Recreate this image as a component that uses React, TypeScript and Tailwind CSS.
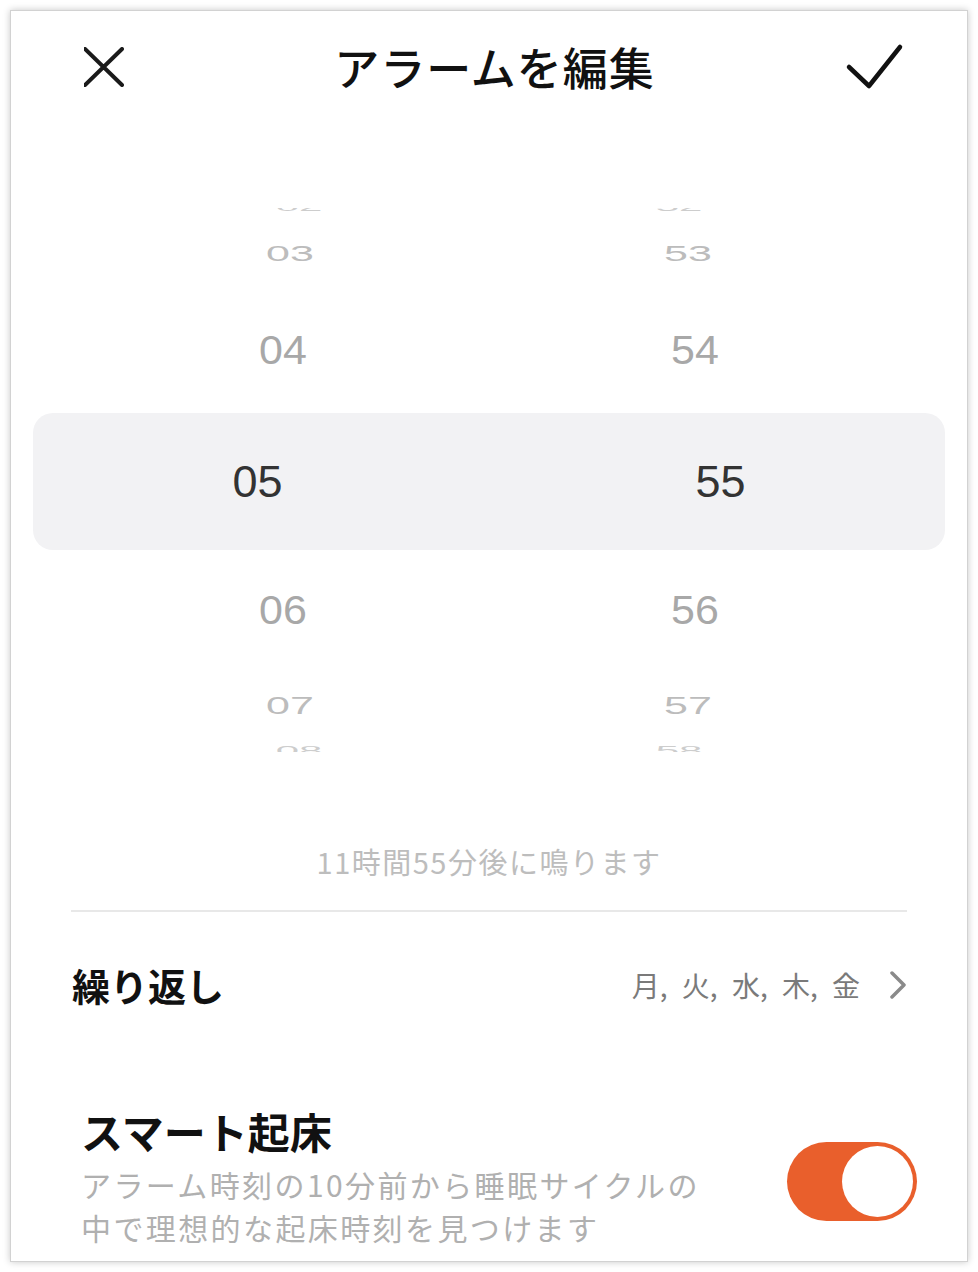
import React from "react";

type WheelRow = {
  hour: string;
  minute: string;
  rowClass: string;
  gapClass: string;
  textClass: string;
};

// rows of the time wheel, top to bottom (05 / 55 is the selected one)
const rows: WheelRow[] = [
  {
    hour: "02",
    minute: "52",
    rowClass: "h-[25px] -mt-[14px]",
    gapClass: "gap-[320px]",
    textClass: "text-[42px] text-[#cdcdcd] scale-y-[0.3]",
  },
  {
    hour: "03",
    minute: "53",
    rowClass: "h-[69px]",
    gapClass: "gap-[338px]",
    textClass: "text-[43px] text-[#bcbcbc] scale-y-[0.52]",
  },
  {
    hour: "04",
    minute: "54",
    rowClass: "h-[125px]",
    gapClass: "gap-[352px]",
    textClass: "text-[43px] text-[#a8a8a8] scale-y-[0.95]",
  },
  {
    hour: "05",
    minute: "55",
    rowClass: "h-[137px] mx-[22px] rounded-[20px] bg-[#f2f2f4]",
    gapClass: "gap-[403px]",
    textClass: "text-[45px] text-[#333333]",
  },
  {
    hour: "06",
    minute: "56",
    rowClass: "h-[121px]",
    gapClass: "gap-[352px]",
    textClass: "text-[43px] text-[#a8a8a8] scale-y-[0.95]",
  },
  {
    hour: "07",
    minute: "57",
    rowClass: "h-[71px]",
    gapClass: "gap-[338px]",
    textClass: "text-[43px] text-[#bcbcbc] scale-y-[0.55]",
  },
  {
    hour: "08",
    minute: "58",
    rowClass: "h-[18px]",
    gapClass: "gap-[320px]",
    textClass: "text-[42px] text-[#cdcdcd] scale-y-[0.3]",
  },
];

const jp = "font-['Noto_Sans_CJK_JP','Noto_Sans',sans-serif]";

const App = () => {
  return (
    <div className="w-[978px] h-[1272px] bg-white p-[10px]">
      <div
        className={`w-[958px] h-[1252px] overflow-hidden bg-white border border-[#d2d2d2] shadow-[0_0_7px_rgba(0,0,0,0.22)] ${jp}`}
      >
        {/* header */}
        <div className="grid grid-cols-[1fr_auto_1fr] items-center h-[111px] pl-[73px] pr-[62px]">
          <div>
            <svg width="40" height="40" viewBox="0 0 40 40" fill="none">
              <path
                d="M1 2 L38 38 M38 2 L1 38"
                stroke="#1a1a1a"
                strokeWidth="4"
                strokeLinecap="round"
              />
            </svg>
          </div>
          <div className="text-[45px] font-medium text-[#111] leading-none tracking-[1px]">
            アラームを編集
          </div>
          <div className="flex justify-end">
            <svg width="60" height="50" viewBox="0 0 60 50" fill="none">
              <path
                d="M4 25 L24 44 L55 5"
                stroke="#111"
                strokeWidth="4.5"
                strokeLinecap="round"
                strokeLinejoin="round"
              />
            </svg>
          </div>
        </div>

        {/* time wheel */}
        <div className="mt-[86px] h-[544px] overflow-hidden flex flex-col font-['Liberation_Sans',Arial,sans-serif]">
          {rows.map((row) => (
            <div
              key={row.hour}
              className={`shrink-0 flex items-center justify-center ${row.rowClass} ${row.gapClass}`}
            >
              <span className={`inline-block w-[60px] text-center leading-none ${row.textClass}`}>
                {row.hour}
              </span>
              <span className={`inline-block w-[60px] text-center leading-none ${row.textClass}`}>
                {row.minute}
              </span>
            </div>
          ))}
        </div>

        <div className="mt-[90px] h-[40px] flex items-center justify-center text-[29px] tracking-[1.5px] text-[#bdbdbd]">
          11時間55分後に鳴ります
        </div>

        <div className="mt-[28px] mx-[60px] h-[2px] bg-[#e8e8e8]" />

        {/* repeat */}
        <div className="mt-[50px] h-[46px] flex items-center justify-between pl-[61px] pr-[61px]">
          <div className="text-[38px] font-bold text-[#111] leading-none">繰り返し</div>
          <div className="flex items-center gap-[30px]">
            <span className="text-[28px] text-[#7a7a7a] leading-none [word-spacing:8px]">
              月, 火, 水, 木, 金
            </span>
            <svg width="16" height="28" viewBox="0 0 16 28" fill="none">
              <path
                d="M2 2 L14 14 L2 26"
                stroke="#8a8a8a"
                strokeWidth="3.5"
                strokeLinecap="round"
                strokeLinejoin="round"
              />
            </svg>
          </div>
        </div>

        {/* smart wake */}
        <div className="mt-[98px] flex items-center justify-between pl-[70px] pr-[50px]">
          <div className="flex flex-col gap-[7px]">
            <div className="text-[42px] font-bold text-[#111] leading-[50px]">スマート起床</div>
            <div className="text-[30px] text-[#b0b0b0] leading-[43px] tracking-[2.4px]">
              アラーム時刻の10分前から睡眠サイクルの
              <br />
              中で理想的な起床時刻を見つけます
            </div>
          </div>
          <div className="mt-[8px] w-[130px] h-[79px] rounded-full bg-[#e95f2c] flex items-center justify-end pr-[4px]">
            <div className="w-[71px] h-[71px] rounded-full bg-white" />
          </div>
        </div>
      </div>
    </div>
  );
};

export default App;
